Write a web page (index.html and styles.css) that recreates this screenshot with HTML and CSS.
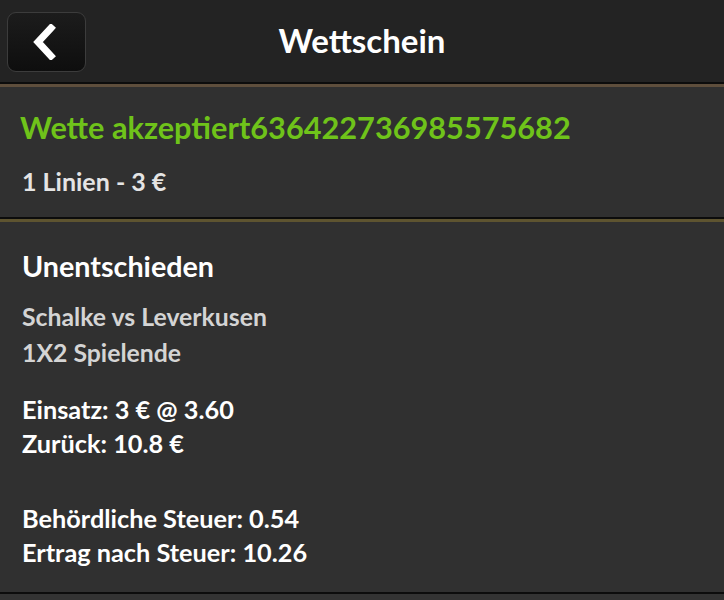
FILE: index.html
```html
<!DOCTYPE html>
<html lang="de">
<head>
<meta charset="utf-8">
<title>Wettschein</title>
<link rel="stylesheet" href="styles.css">
</head>
<body>
<header class="topbar">
  <button class="back" aria-label="Zurück">
    <svg width="26" height="36" viewBox="0 0 26 36"><path d="M20 4 L7 18 L20 32" fill="none" stroke="#fff" stroke-width="7" stroke-linecap="square" stroke-linejoin="miter"/></svg>
  </button>
  <h1 class="title">Wettschein</h1>
  <span class="spacer"></span>
</header>
<section class="summary">
  <div class="accepted">Wette akzeptiert636422736985575682</div>
  <div class="lines">1 Linien - 3 €</div>
</section>
<section class="bet">
  <div class="outcome">Unentschieden</div>
  <div class="sub">Schalke vs Leverkusen</div>
  <div class="sub">1X2 Spielende</div>
  <div class="stake">
    <div class="row">Einsatz: 3 € @ 3.60</div>
    <div class="row">Zurück: 10.8 €</div>
  </div>
  <div class="tax">
    <div class="row">Behördliche Steuer: 0.54</div>
    <div class="row">Ertrag nach Steuer: 10.26</div>
  </div>
</section>
<div class="rest"></div>
</body>
</html>
```
FILE: styles.css
```css
html, body {
  margin: 0;
  padding: 0;
  background: #333333;
  font-family: Lato, "Liberation Sans", sans-serif;
  color: #ffffff;
}
.topbar {
  height: 82px;
  background: #232323;
  border-bottom: 2px solid #0c0c0c;
  display: grid;
  grid-template-columns: 92px 1fr 92px;
  align-items: center;
}
.back {
  margin-left: 7px;
  width: 79px;
  height: 60px;
  border-radius: 9px;
  border: 1px solid #3c3c3c;
  background: linear-gradient(#1c1c1c, #0e0e0e);
  display: flex;
  align-items: center;
  justify-content: center;
  padding: 0 6px 0 0;
  margin-top: 1px;
}
.title {
  margin: 0 0 3px;
  text-align: center;
  font-size: 33px;
  font-weight: 700;
  line-height: 40px;
}
.summary {
  background: #303030;
  border-top: 3px solid #5e4e3c;
  padding: 23px 20px 21px;
  border-bottom: 2px solid #0c0c0c;
}
.accepted {
  color: #6fc31a;
  font-size: 30.7px;
  font-weight: 700;
  line-height: 36px;
}
.lines {
  margin-top: 20px;
  font-size: 25px;
  line-height: 30px;
  font-weight: 700;
  color: #e4e4e4;
  padding-left: 2px;
}
.bet {
  background: #303030;
  border-top: 3px solid #5e5430;
  padding: 27px 20px 23px 22px;
  border-bottom: 2px solid #0c0c0c;
}
.outcome {
  font-size: 28.7px;
  line-height: 34px;
  font-weight: 700;
}
.sub {
  font-size: 24.8px;
  line-height: 36px;
  font-weight: 700;
  color: #d4d4d4;
}
.outcome + .sub {
  margin-top: 16px;
}
.stake {
  margin-top: 21px;
}
.tax {
  margin-top: 41px;
}
.row {
  font-size: 25.3px;
  line-height: 34px;
  font-weight: 700;
}
.rest {
  height: 10px;
}
```
